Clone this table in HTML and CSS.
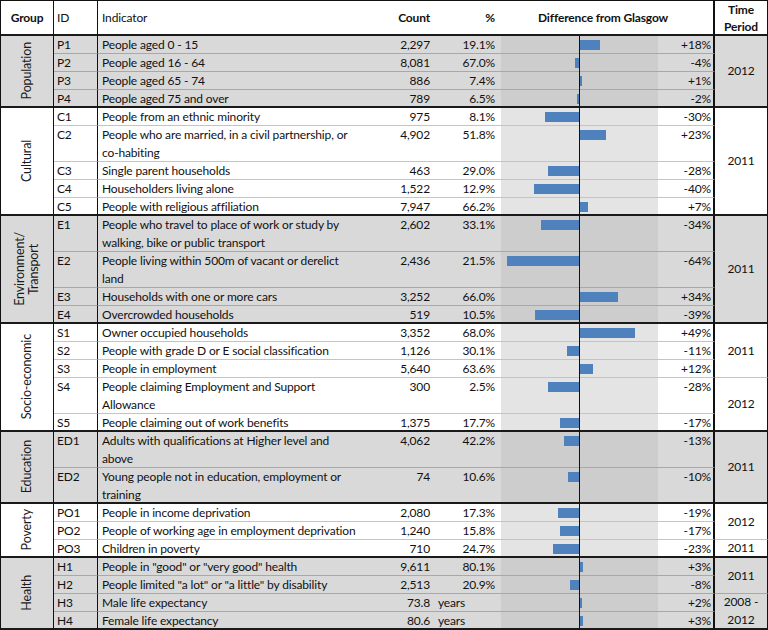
FILE: index.html
```html
<!DOCTYPE html>
<html lang="en">
<head>
<meta charset="utf-8">
<title>Difference from Glasgow</title>
<link rel="stylesheet" href="styles.css">
</head>
<body>
<div class="sheet">
  <div class="r head">
    <div class="g hc"><b>Group</b></div>
    <div class="id hc">ID</div>
    <div class="ind hc">Indicator</div>
    <div class="n hc"><b>Count</b></div>
    <div class="p hc"><b>%</b></div>
    <div class="diffh hc"><b>Difference from Glasgow</b></div>
    <div class="t hc"><b>Time<br>Period</b></div>
  </div>

  <!-- Population -->
  <div class="r gray">
    <div class="g s4"><span class="lbl">Population</span></div>
    <div class="id">P1</div><div class="ind">People aged 0 - 15</div><div class="n">2,297</div><div class="p">19.1%</div>
    <div class="ch"><div class="neg"></div><div class="pos"><i class="bar" style="width:20px"></i></div></div><div class="v">+18%</div>
    <div class="t s4 end">2012</div>
  </div>
  <div class="r gray">
    <div class="id">P2</div><div class="ind">People aged 16 - 64</div><div class="n">8,081</div><div class="p">67.0%</div>
    <div class="ch"><div class="neg"><i class="bar" style="width:4px"></i></div><div class="pos"></div></div><div class="v">-4%</div>
  </div>
  <div class="r gray">
    <div class="id">P3</div><div class="ind">People aged 65 - 74</div><div class="n">886</div><div class="p">7.4%</div>
    <div class="ch"><div class="neg"></div><div class="pos"><i class="bar" style="width:2px"></i></div></div><div class="v">+1%</div>
  </div>
  <div class="r gray last">
    <div class="id">P4</div><div class="ind">People aged 75 and over</div><div class="n">789</div><div class="p">6.5%</div>
    <div class="ch"><div class="neg"><i class="bar" style="width:2px"></i></div><div class="pos"></div></div><div class="v">-2%</div>
  </div>

  <!-- Cultural -->
  <div class="r white">
    <div class="g s6"><span class="lbl">Cultural</span></div>
    <div class="id">C1</div><div class="ind">People from an ethnic minority</div><div class="n">975</div><div class="p">8.1%</div>
    <div class="ch"><div class="neg"><i class="bar" style="width:34px"></i></div><div class="pos"></div></div><div class="v">-30%</div>
    <div class="t s6 end">2011</div>
  </div>
  <div class="r white two">
    <div class="id">C2</div><div class="ind">People who are married, in a civil partnership, or<br>co-habiting</div><div class="n">4,902</div><div class="p">51.8%</div>
    <div class="ch"><div class="neg"></div><div class="pos"><i class="bar" style="width:26px"></i></div></div><div class="v">+23%</div>
  </div>
  <div class="r white">
    <div class="id">C3</div><div class="ind">Single parent households</div><div class="n">463</div><div class="p">29.0%</div>
    <div class="ch"><div class="neg"><i class="bar" style="width:31px"></i></div><div class="pos"></div></div><div class="v">-28%</div>
  </div>
  <div class="r white">
    <div class="id">C4</div><div class="ind">Householders living alone</div><div class="n">1,522</div><div class="p">12.9%</div>
    <div class="ch"><div class="neg"><i class="bar" style="width:45px"></i></div><div class="pos"></div></div><div class="v">-40%</div>
  </div>
  <div class="r white last">
    <div class="id">C5</div><div class="ind">People with religious affiliation</div><div class="n">7,947</div><div class="p">66.2%</div>
    <div class="ch"><div class="neg"></div><div class="pos"><i class="bar" style="width:8px"></i></div></div><div class="v">+7%</div>
  </div>

  <!-- Environment / Transport -->
  <div class="r gray two">
    <div class="g s6"><span class="lbl">Environment/<br>Transport</span></div>
    <div class="id">E1</div><div class="ind">People who travel to place of work or study by<br>walking, bike or public transport</div><div class="n">2,602</div><div class="p">33.1%</div>
    <div class="ch"><div class="neg"><i class="bar" style="width:38px"></i></div><div class="pos"></div></div><div class="v">-34%</div>
    <div class="t s6 end">2011</div>
  </div>
  <div class="r gray two">
    <div class="id">E2</div><div class="ind">People living within 500m of vacant or derelict<br>land</div><div class="n">2,436</div><div class="p">21.5%</div>
    <div class="ch"><div class="neg"><i class="bar" style="width:72px"></i></div><div class="pos"></div></div><div class="v">-64%</div>
  </div>
  <div class="r gray">
    <div class="id">E3</div><div class="ind">Households with one or more cars</div><div class="n">3,252</div><div class="p">66.0%</div>
    <div class="ch"><div class="neg"></div><div class="pos"><i class="bar" style="width:38px"></i></div></div><div class="v">+34%</div>
  </div>
  <div class="r gray last">
    <div class="id">E4</div><div class="ind">Overcrowded households</div><div class="n">519</div><div class="p">10.5%</div>
    <div class="ch"><div class="neg"><i class="bar" style="width:44px"></i></div><div class="pos"></div></div><div class="v">-39%</div>
  </div>

  <!-- Socio-economic -->
  <div class="r white">
    <div class="g s6"><span class="lbl">Socio-economic</span></div>
    <div class="id">S1</div><div class="ind">Owner occupied households</div><div class="n">3,352</div><div class="p">68.0%</div>
    <div class="ch"><div class="neg"></div><div class="pos"><i class="bar" style="width:55px"></i></div></div><div class="v">+49%</div>
    <div class="t s3">2011</div>
  </div>
  <div class="r white">
    <div class="id">S2</div><div class="ind">People with grade D or E social classification</div><div class="n">1,126</div><div class="p">30.1%</div>
    <div class="ch"><div class="neg"><i class="bar" style="width:12px"></i></div><div class="pos"></div></div><div class="v">-11%</div>
  </div>
  <div class="r white">
    <div class="id">S3</div><div class="ind">People in employment</div><div class="n">5,640</div><div class="p">63.6%</div>
    <div class="ch"><div class="neg"></div><div class="pos"><i class="bar" style="width:13px"></i></div></div><div class="v">+12%</div>
  </div>
  <div class="r white two">
    <div class="id">S4</div><div class="ind">People claiming Employment and Support<br>Allowance</div><div class="n">300</div><div class="p">2.5%</div>
    <div class="ch"><div class="neg"><i class="bar" style="width:31px"></i></div><div class="pos"></div></div><div class="v">-28%</div>
    <div class="t s3 end">2012</div>
  </div>
  <div class="r white last">
    <div class="id">S5</div><div class="ind">People claiming out of work benefits</div><div class="n">1,375</div><div class="p">17.7%</div>
    <div class="ch"><div class="neg"><i class="bar" style="width:19px"></i></div><div class="pos"></div></div><div class="v">-17%</div>
  </div>

  <!-- Education -->
  <div class="r gray two">
    <div class="g s4"><span class="lbl">Education</span></div>
    <div class="id">ED1</div><div class="ind">Adults with qualifications at Higher level and<br>above</div><div class="n">4,062</div><div class="p">42.2%</div>
    <div class="ch"><div class="neg"><i class="bar" style="width:15px"></i></div><div class="pos"></div></div><div class="v">-13%</div>
    <div class="t s4 end">2011</div>
  </div>
  <div class="r gray two last">
    <div class="id">ED2</div><div class="ind">Young people not in education, employment or<br>training</div><div class="n">74</div><div class="p">10.6%</div>
    <div class="ch"><div class="neg"><i class="bar" style="width:11px"></i></div><div class="pos"></div></div><div class="v">-10%</div>
  </div>

  <!-- Poverty -->
  <div class="r white">
    <div class="g s3"><span class="lbl">Poverty</span></div>
    <div class="id">PO1</div><div class="ind">People in income deprivation</div><div class="n">2,080</div><div class="p">17.3%</div>
    <div class="ch"><div class="neg"><i class="bar" style="width:21px"></i></div><div class="pos"></div></div><div class="v">-19%</div>
    <div class="t s2">2012</div>
  </div>
  <div class="r white">
    <div class="id">PO2</div><div class="ind">People of working age in employment deprivation</div><div class="n">1,240</div><div class="p">15.8%</div>
    <div class="ch"><div class="neg"><i class="bar" style="width:19px"></i></div><div class="pos"></div></div><div class="v">-17%</div>
  </div>
  <div class="r white last">
    <div class="id">PO3</div><div class="ind">Children in poverty</div><div class="n">710</div><div class="p">24.7%</div>
    <div class="ch"><div class="neg"><i class="bar" style="width:26px"></i></div><div class="pos"></div></div><div class="v">-23%</div>
    <div class="t s1 end">2011</div>
  </div>

  <!-- Health -->
  <div class="r gray">
    <div class="g s4"><span class="lbl">Health</span></div>
    <div class="id">H1</div><div class="ind">People in "good" or "very good" health</div><div class="n">9,611</div><div class="p">80.1%</div>
    <div class="ch"><div class="neg"></div><div class="pos"><i class="bar" style="width:3px"></i></div></div><div class="v">+3%</div>
    <div class="t s2">2011</div>
  </div>
  <div class="r gray">
    <div class="id">H2</div><div class="ind">People limited "a lot" or "a little" by disability</div><div class="n">2,513</div><div class="p">20.9%</div>
    <div class="ch"><div class="neg"><i class="bar" style="width:9px"></i></div><div class="pos"></div></div><div class="v">-8%</div>
  </div>
  <div class="r gray">
    <div class="id">H3</div><div class="ind">Male life expectancy</div><div class="n">73.8</div><div class="p unit">years</div>
    <div class="ch"><div class="neg"></div><div class="pos"><i class="bar" style="width:2px"></i></div></div><div class="v">+2%</div>
    <div class="t s2 end">2008 -<br>2012</div>
  </div>
  <div class="r gray last">
    <div class="id">H4</div><div class="ind">Female life expectancy</div><div class="n">80.6</div><div class="p unit">years</div>
    <div class="ch"><div class="neg"></div><div class="pos"><i class="bar" style="width:3px"></i></div></div><div class="v">+3%</div>
  </div>

  <div class="axis"></div>
</div>
</body>
</html>
```

FILE: styles.css
```css
* { box-sizing: border-box; }

body {
  margin: 0;
  background: #fff;
  color: #111;
  font-family: Lato, "Liberation Sans", sans-serif;
  font-size: 12px;
  letter-spacing: -0.15px;
}

.sheet {
  position: relative;
  width: 768px;
  display: grid;
  grid-template-columns: 54px 44px 300px 36px 67px 157px 57px 53px;
  grid-template-rows: 36px;
  grid-auto-rows: 18px;
}

.r { display: contents; }

.r > div {
  line-height: 18px;
  white-space: nowrap;
}

/* columns */
.g   { grid-column: 1; border-left: 1px solid #111; border-right: 1px solid #111; border-bottom: 2px solid #1a1a1a; display: flex; align-items: center; justify-content: center; }
.id  { grid-column: 2; border-right: 1px solid #111; padding-left: 3px; }
.ind { grid-column: 3; padding-left: 4px; }
.n   { grid-column: 4; text-align: right; padding-right: 4px; }
.p   { grid-column: 5; text-align: right; padding-right: 6px; }
.p.unit { text-align: left; padding-left: 4px; padding-right: 0; }
.ch  { grid-column: 6; display: flex; }
.v   { grid-column: 7; text-align: right; padding-right: 2px; border-right: 2px solid #111; }
.t   { grid-column: 8; border-right: 1px solid #111; display: flex; align-items: center; justify-content: center; text-align: center; }
.diffh { grid-column: 6 / 8; border-right: 2px solid #111; }

/* spans */
.s1 { grid-row: span 1; }
.s2 { grid-row: span 2; }
.s3 { grid-row: span 3; }
.s4 { grid-row: span 4; }
.s6 { grid-row: span 6; }
.two > .id, .two > .ind, .two > .n, .two > .p, .two > .ch, .two > .v { grid-row: span 2; }

/* header */
.head > .hc {
  border-top: 1px solid #111;
  border-bottom: 2px solid #1a1a1a;
  display: flex;
  align-items: center;
  background: #fff;
}
.head > .g { justify-content: center; }
.head > .n, .head > .p { justify-content: flex-end; }
.head > .diffh { justify-content: center; padding-right: 8px; }
.head > .t { justify-content: center; line-height: 17px; }
.head b { font-weight: 700; }

/* row separators */
.white > .id, .white > .ind, .white > .n, .white > .p, .white > .ch, .white > .v { border-bottom: 1px solid #c4c4c4; }
.gray > .id, .gray > .ind, .gray > .n, .gray > .p, .gray > .ch, .gray > .v { border-bottom: 1px solid #a8a8a8; }
.r.last > .id, .r.last > .ind, .r.last > .n, .r.last > .p, .r.last > .ch, .r.last > .v { border-bottom: 2px solid #1a1a1a; }
.white > .t { border-bottom: 1px solid #c4c4c4; }
.gray > .t { border-bottom: 1px solid #a8a8a8; }
.r > .t.end { border-bottom: 2px solid #1a1a1a; }

/* fills */
.white > div { background: #fff; }
.gray > div { background: #d9d9d9; }
.white > .ch { background: #e4e4e4; }
.gray > .ch { background: #cdcdcd; }

/* group labels */
.lbl {
  writing-mode: vertical-rl;
  transform: rotate(180deg);
  text-align: center;
  line-height: 14px;
  color: #1a1a1a;
  font-size: 12.5px;
}

/* bars */
.neg {
  width: 78px;
  display: flex;
  justify-content: flex-end;
  align-items: flex-start;
  padding-top: 4px;
}
.pos {
  flex: 1;
  display: flex;
  align-items: flex-start;
  padding-top: 4px;
  padding-left: 1px;
}
.bar {
  display: block;
  height: 10px;
  background: #4f81bd;
}

.axis {
  position: absolute;
  left: 579px;
  top: 36px;
  bottom: 0;
  width: 1px;
  background: #111;
}
```
